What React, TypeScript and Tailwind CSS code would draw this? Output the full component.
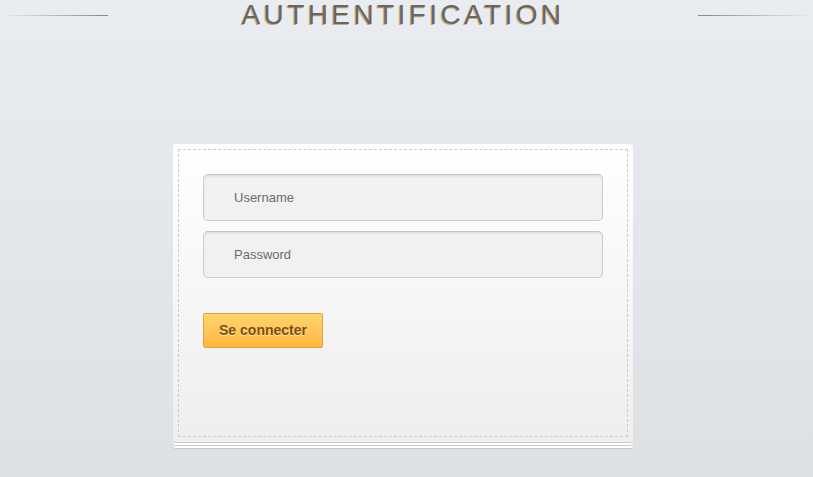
export default function App() {
  return (
    <div className="min-h-[477px] w-full bg-gradient-to-b from-[#e9ecf1] to-[#dde1e4] font-['Liberation_Sans',Arial,sans-serif]">
      {/* Header */}
      <div className="flex items-center justify-between h-[30px]">
        <div className="w-[108px] h-px mt-px bg-gradient-to-r from-transparent to-[#888]" />
        <h1 className="text-[28px] leading-[30px] tracking-[3.4px] text-[#666] [text-shadow:-1px_1px_0_#c9a86a] pl-[0px]">
          AUTHENTIFICATION
        </h1>
        <div className="w-[115px] h-px mt-px bg-gradient-to-r from-[#888] to-transparent" />
      </div>

      {/* Card */}
      <div className="flex justify-center pt-[114px] pr-[7px]">
        <div className="w-[460px] h-[299px] rounded-[3px] bg-gradient-to-b from-white to-[#eee] p-[5px] border-b border-[#ccc] shadow-[0_1px_0_#fff,0_2px_0_#fff,0_3px_0_#c8c8c8,0_4px_0_#fff,0_5px_0_#fff,0_6px_0_#c8c8c8]">
          <div className="h-full border border-dashed border-[#ccc] px-[24px] pt-[24px]">
            <div className="flex flex-col gap-[10px]">
              <div className="h-[47px] rounded-[5px] border border-[#ccc] border-t-[#c4c4c4] bg-[#f1f1f1] shadow-[inset_0_2px_2px_rgba(0,0,0,0.06)] flex items-center pl-[30px] text-[13px] text-[#6b6b6b]">
                Username
              </div>
              <div className="h-[47px] rounded-[5px] border border-[#ccc] border-t-[#c4c4c4] bg-[#f1f1f1] shadow-[inset_0_2px_2px_rgba(0,0,0,0.06)] flex items-center pl-[30px] text-[13px] text-[#6b6b6b]">
                Password
              </div>
            </div>
            <button className="mt-[35px] w-[120px] h-[35px] rounded-[2px] border border-[#e3a43b] bg-gradient-to-b from-[#ffd56e] to-[#ffb73d] text-[14px] font-bold text-[#7d4d10] [text-shadow:0_1px_0_#ffe7a8]">
              Se connecter
            </button>
          </div>
        </div>
      </div>
    </div>
  );
}
